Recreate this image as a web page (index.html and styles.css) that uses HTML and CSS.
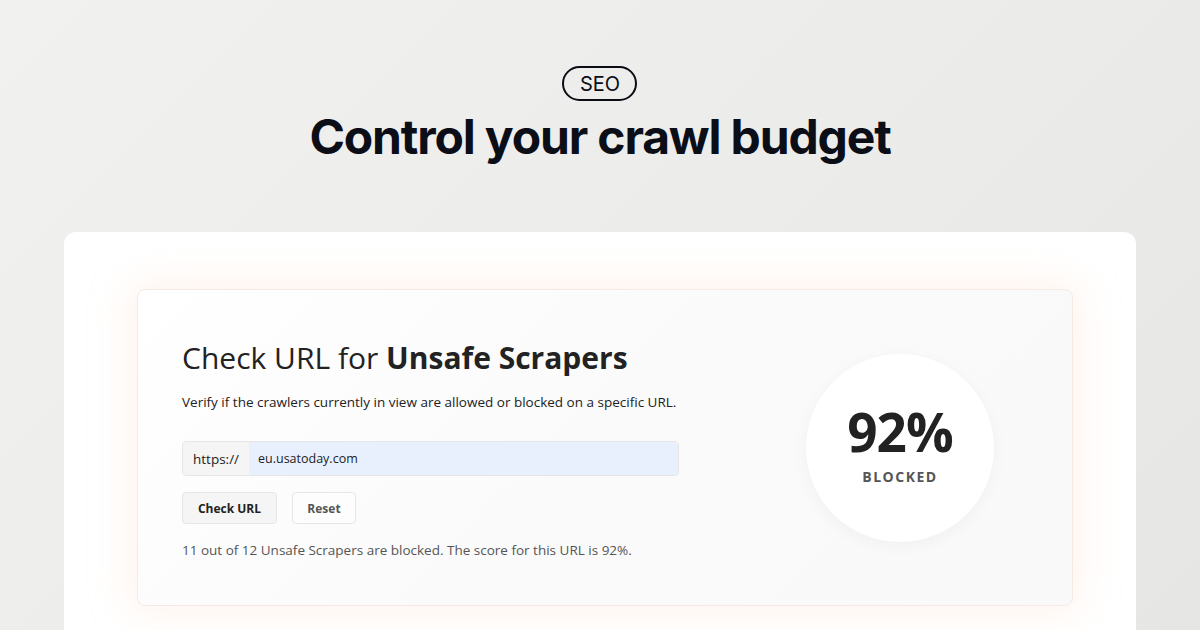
FILE: index.html
```html
<!DOCTYPE html>
<html>
<head>
<meta charset="utf-8">
<link rel="stylesheet" href="styles.css">
</head>
<body>
<div class="page">
  <header class="hero">
    <span class="pill">SEO</span>
    <h1 class="title">Control your crawl budget</h1>
  </header>
  <section class="sheet">
    <div class="panel">
      <div class="left">
        <h2 class="ptitle">Check URL for <strong>Unsafe Scrapers</strong></h2>
        <p class="sub">Verify if the crawlers currently in view are allowed or blocked on a specific URL.</p>
        <div class="inputgroup">
          <span class="prefix">https://</span>
          <span class="field">eu.usatoday.com</span>
        </div>
        <div class="buttons">
          <button class="btn btn-primary">Check URL</button>
          <button class="btn btn-ghost">Reset</button>
        </div>
        <p class="status">11 out of 12 Unsafe Scrapers are blocked. The score for this URL is 92%.</p>
      </div>
      <div class="right">
        <div class="circle">
          <div class="pct">92%</div>
          <div class="label">BLOCKED</div>
        </div>
      </div>
    </div>
  </section>
</div>
</body>
</html>
```
FILE: styles.css
```css
* { box-sizing: border-box; }
html, body { margin: 0; padding: 0; }
body {
  width: 1200px;
  height: 630px;
  overflow: hidden;
  background: linear-gradient(135deg, #f1f1f0 0%, #ebebea 60%, #e6e6e4 100%);
  font-family: "Open Sans", sans-serif;
}
.page {
  display: flex;
  flex-direction: column;
  align-items: center;
}
.hero {
  display: flex;
  flex-direction: column;
  align-items: center;
  padding-top: 66px;
}
.pill {
  display: inline-flex;
  align-items: center;
  justify-content: center;
  width: 75px;
  height: 35px;
  border: 2px solid #0b0d14;
  border-radius: 18px;
  font-family: Inter, sans-serif;
  font-size: 20px;
  color: #0b0d14;
}
.title {
  margin: 6px 0 0;
  font-family: Inter, sans-serif;
  font-weight: 700;
  font-size: 48px;
  line-height: 60px;
  letter-spacing: -1.15px;
  color: #0b0d17;
}
.sheet {
  margin-top: 65px;
  width: 1072px;
  height: 420px;
  background: #ffffff;
  border-radius: 12px;
  padding: 57px 63px 0 73px;
}
.panel {
  width: 936px;
  height: 317px;
  border: 1px solid #f7e9e3;
  border-radius: 8px;
  background: linear-gradient(135deg, #ffffff 0%, #fafafa 50%, #f9f9f9 100%);
  box-shadow: 0 0 40px 6px rgba(255, 220, 200, 0.35);
  display: flex;
  justify-content: space-between;
  padding: 0 78px 0 44px;
}
.left {
  padding-top: 48px;
}
.ptitle {
  margin: 0;
  font-weight: 400;
  font-size: 30px;
  line-height: 40px;
  color: #222;
}
.ptitle strong { font-weight: 700; }
.sub {
  margin: 14px 0 0;
  font-size: 13.5px;
  line-height: 20px;
  color: #222;
}
.inputgroup {
  margin-top: 29px;
  width: 497px;
  height: 35px;
  display: flex;
  border: 1px solid #e6e6e6;
  border-radius: 4px;
  overflow: hidden;
  color: #222;
}
.prefix {
  width: 66px;
  background: #f5f5f5;
  display: flex;
  align-items: center;
  padding-left: 10px;
  font-size: 13.5px;
}
.field {
  flex: 1;
  background: #e8f0fe;
  display: flex;
  align-items: center;
  padding-left: 9px;
  font-size: 12.5px;
}
.buttons {
  margin-top: 16px;
  display: flex;
  gap: 15px;
}
.btn {
  height: 32px;
  border: 1px solid #e6e6e6;
  border-radius: 4px;
  font-family: "Open Sans", sans-serif;
  font-weight: 700;
  font-size: 12px;
  padding: 0;
  white-space: nowrap;
  cursor: pointer;
}
.btn-primary { background: #f5f5f5; color: #222; width: 95px; }
.btn-ghost { background: #fdfdfd; color: #555; width: 64px; }
.status {
  margin: 16px 0 0;
  font-size: 13.5px;
  line-height: 20px;
  color: #555;
}
.right {
  display: flex;
  align-items: center;
}
.circle {
  width: 188px;
  height: 188px;
  border-radius: 50%;
  background: #fff;
  box-shadow: 0 4px 16px rgba(0, 0, 0, 0.04);
  display: flex;
  flex-direction: column;
  align-items: center;
  justify-content: center;
}
.pct {
  font-weight: 700;
  font-size: 53px;
  line-height: 54px;
  color: #222;
  letter-spacing: -1px;
}
.label {
  margin-top: 8px;
  margin-bottom: 3px;
  font-weight: 700;
  font-size: 14px;
  line-height: 20px;
  letter-spacing: 1.5px;
  color: #555;
}
```
